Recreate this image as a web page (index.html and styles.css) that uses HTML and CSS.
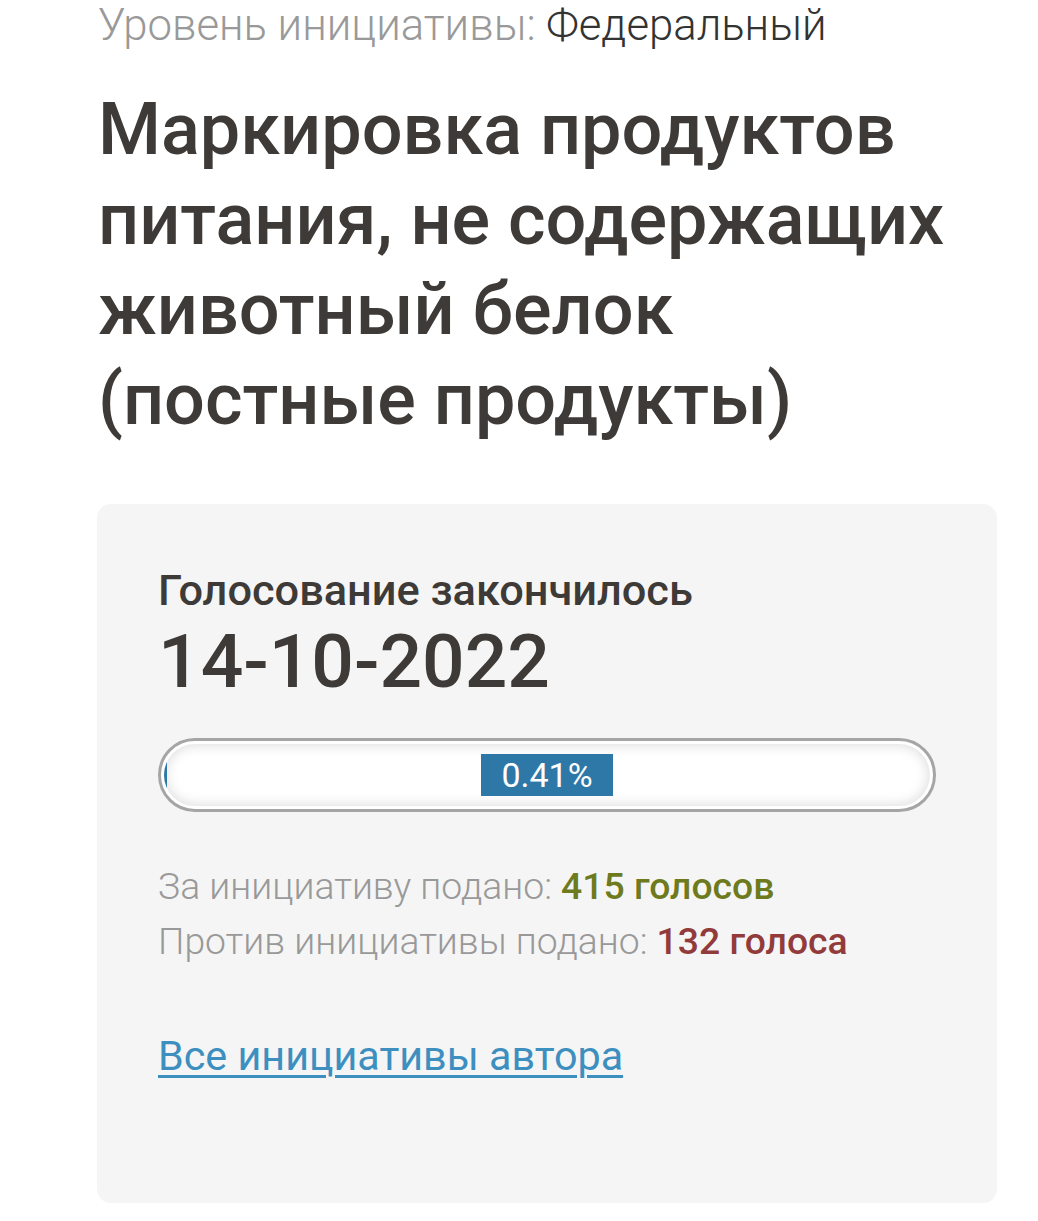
FILE: index.html
```html
<!DOCTYPE html>
<html lang="ru">
<head>
<meta charset="utf-8">
<link rel="stylesheet" href="styles.css">
</head>
<body>
<div class="page">
  <div class="level"><span class="level-label">Уровень инициативы:</span> <span class="level-value">Федеральный</span></div>
  <h1 class="title">Маркировка продуктов питания, не содержащих животный белок (постные продукты)</h1>
  <div class="card">
    <div class="status">Голосование закончилось</div>
    <div class="date">14-10-2022</div>
    <div class="bar">
      <div class="bar-inner">
        <div class="bar-fill" style="width: 0.41%"></div>
        <div class="bar-label">0.41%</div>
      </div>
    </div>
    <div class="votes">
      <div class="vote">За инициативу подано: <span class="vote-for">415 голосов</span></div>
      <div class="vote">Против инициативы подано: <span class="vote-against">132 голоса</span></div>
    </div>
    <a class="author-link" href="#">Все инициативы автора</a>
  </div>
</div>
</body>
</html>
```

FILE: styles.css
```css
html, body {
  margin: 0;
  padding: 0;
  background: #ffffff;
}

body {
  font-family: Roboto, "Noto Sans", sans-serif;
  color: #3d3a37;
}

.page {
  padding: 0 41px 0 97px;
}

.level {
  padding-left: 1px;
  padding-top: 1px;
  font-size: 43.7px;
  line-height: 48px;
  font-weight: 300;
  white-space: nowrap;
}

.level-label {
  color: #999999;
}

.level-value {
  color: #333333;
  font-weight: 300;
}

.title {
  margin: 36px 0 0 0;
  padding-left: 1px;
  font-size: 72px;
  line-height: 90px;
  font-weight: 500;
  color: #3d3a37;
  max-width: 880px;
}

.card {
  margin-top: 59px;
  width: 900px;
  box-sizing: border-box;
  background: #f5f5f5;
  border-radius: 14px;
  padding: 62px 61px 124px 61px;
}

.status {
  font-size: 43.3px;
  line-height: 50px;
  font-weight: 500;
  color: #3d3a37;
}

.date {
  margin-top: 10px;
  font-size: 75px;
  line-height: 70px;
  font-weight: 500;
  color: #3d3a37;
}

.bar {
  margin-top: 42px;
  height: 74px;
  box-sizing: border-box;
  border: 3px solid #a5a5a5;
  border-radius: 37px;
  padding: 3px;
  background: #ffffff;
}

.bar-inner {
  position: relative;
  height: 100%;
  border-radius: 32px;
  background: #ffffff;
  box-shadow: inset 0 0 14px rgba(0, 0, 0, 0.16);
  overflow: hidden;
}

.bar-fill {
  height: 100%;
  background: #2e78a8;
}

.bar-label {
  position: absolute;
  left: 50%;
  top: 50%;
  transform: translate(-50%, -50%);
  width: 132px;
  height: 42px;
  background: #2e78a8;
  color: #ffffff;
  font-size: 34px;
  line-height: 42px;
  font-weight: 400;
  text-align: center;
}

.votes {
  margin-top: 47px;
}

.vote {
  font-size: 37.3px;
  line-height: 55px;
  font-weight: 300;
  color: #999999;
  white-space: nowrap;
}

.vote-for {
  color: #6e7a1e;
  font-weight: 500;
}

.vote-against {
  color: #923b3b;
  font-weight: 500;
}

.author-link {
  display: inline-block;
  margin-top: 64px;
  font-size: 41.3px;
  line-height: 46px;
  font-weight: 400;
  color: #3d8fc0;
  text-decoration: underline;
  text-decoration-thickness: 3px;
  text-underline-offset: 5px;
}
```
